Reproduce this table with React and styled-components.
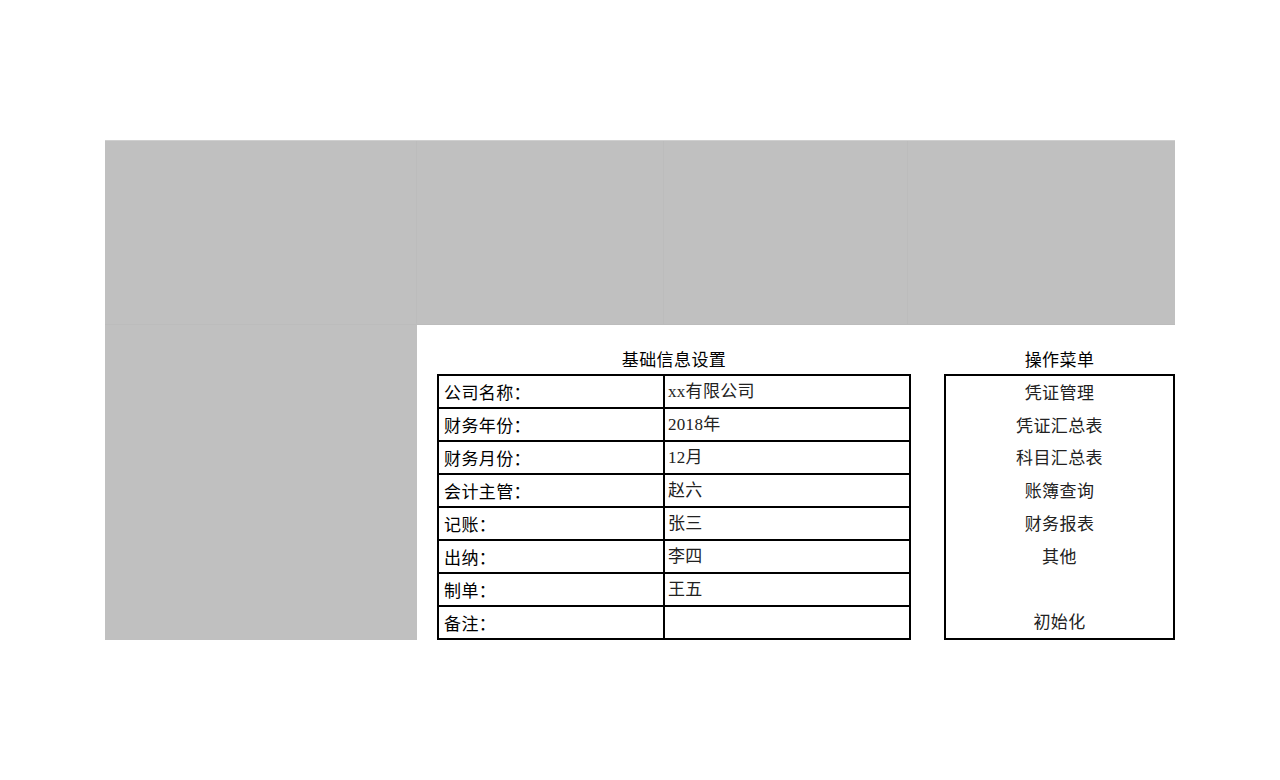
import React from 'react';
import styled, { createGlobalStyle } from 'styled-components';

const GlobalStyle = createGlobalStyle`
  html, body {
    margin: 0;
    padding: 0;
    background: #ffffff;
  }
  body {
    font-family: "Liberation Serif", "Noto Sans CJK SC", serif;
    font-size: 17px;
    color: #000;
  }
`;

const info = [
  ['公司名称：', 'xx有限公司'],
  ['财务年份：', '2018年'],
  ['财务月份：', '12月'],
  ['会计主管：', '赵六'],
  ['记账：', '张三'],
  ['出纳：', '李四'],
  ['制单：', '王五'],
  ['备注：', ''],
];

const menu = ['凭证管理', '凭证汇总表', '科目汇总表', '账簿查询', '财务报表', '其他', '', '初始化'];

const App = () => (
  <>
    <GlobalStyle />
    <Page>
      <Sheet>
        <Band>
          <BandCell />
          <BandCell />
          <BandCell />
          <BandCell $last />
        </Band>
        <SideCell />
        <Workspace>
          <Title $col="2 / 4">基础信息设置</Title>
          <Title $col="5 / 6">操作菜单</Title>
          <InfoTable>
            <tbody>
              {info.map(([label, value]) => (
                <tr key={label}>
                  <LabelCell>{label}</LabelCell>
                  <ValueCell>{value}</ValueCell>
                </tr>
              ))}
            </tbody>
          </InfoTable>
          <MenuBox>
            {menu.map((item, i) => (
              <MenuItem key={i}>{item}</MenuItem>
            ))}
          </MenuBox>
        </Workspace>
      </Sheet>
    </Page>
  </>
);

export default App;

const Page = styled.div`
  width: 1280px;
  height: 780px;
  padding: 140px 0 0 105px;
  box-sizing: border-box;
`;

const Sheet = styled.div`
  display: grid;
  grid-template-columns: 312px 758px;
  grid-template-rows: 185px 315px;
  width: 1070px;
`;

const Band = styled.div`
  grid-column: 1 / 3;
  display: grid;
  grid-template-columns: 312px 247px 244px 267px;
  background: #c0c0c0;
  border-top: 1px solid #cfcfcf;
  box-sizing: border-box;
`;

const BandCell = styled.div`
  border-right: ${(p) => (p.$last ? 'none' : '1px solid #bcbcbc')};
  border-bottom: 1px solid #bcbcbc;
`;

const SideCell = styled.div`
  background: #c0c0c0;
`;

const Workspace = styled.div`
  display: grid;
  grid-template-columns: 20px 227px 247px 33px 231px;
  grid-template-rows: 49px 266px;
  background: #fff;
`;

const Title = styled.div`
  grid-column: ${(p) => p.$col};
  grid-row: 1;
  display: flex;
  align-items: flex-end;
  justify-content: center;
  padding-bottom: 7px;
  font-family: "Noto Sans CJK SC", serif;
  font-size: 17px;
  letter-spacing: 0.4px;
  line-height: 1;
  color: #000;
`;

const InfoTable = styled.table`
  grid-column: 2 / 4;
  grid-row: 2;
  border-collapse: collapse;
  border: 2px solid #000;
  width: 474px;
  height: 265px;
  align-self: start;
`;

const LabelCell = styled.td`
  width: 219px;
  height: 30px;
  padding: 0 0 1px 5px;
  border: 2px solid #000;
  font-family: "Noto Sans CJK SC", serif;
  font-size: 17px;
  letter-spacing: 0.4px;
  color: #000;
  vertical-align: middle;
  line-height: 1;
`;

const ValueCell = styled.td`
  padding: 0 0 0 3px;
  border: 2px solid #000;
  font-family: "Liberation Serif", "Noto Sans CJK SC", serif;
  font-size: 17px;
  letter-spacing: 0.3px;
  color: #222;
  vertical-align: middle;
  line-height: 1;
`;

const MenuBox = styled.div`
  grid-column: 5;
  grid-row: 2;
  display: grid;
  grid-template-rows: repeat(8, 1fr);
  border: 2px solid #000;
  box-sizing: border-box;
  height: 266px;
`;

const MenuItem = styled.div`
  display: flex;
  align-items: center;
  justify-content: center;
  padding-bottom: 2px;
  font-family: "Noto Sans CJK SC", serif;
  font-size: 17px;
  letter-spacing: 0.4px;
  line-height: 1;
  color: #222;
`;
